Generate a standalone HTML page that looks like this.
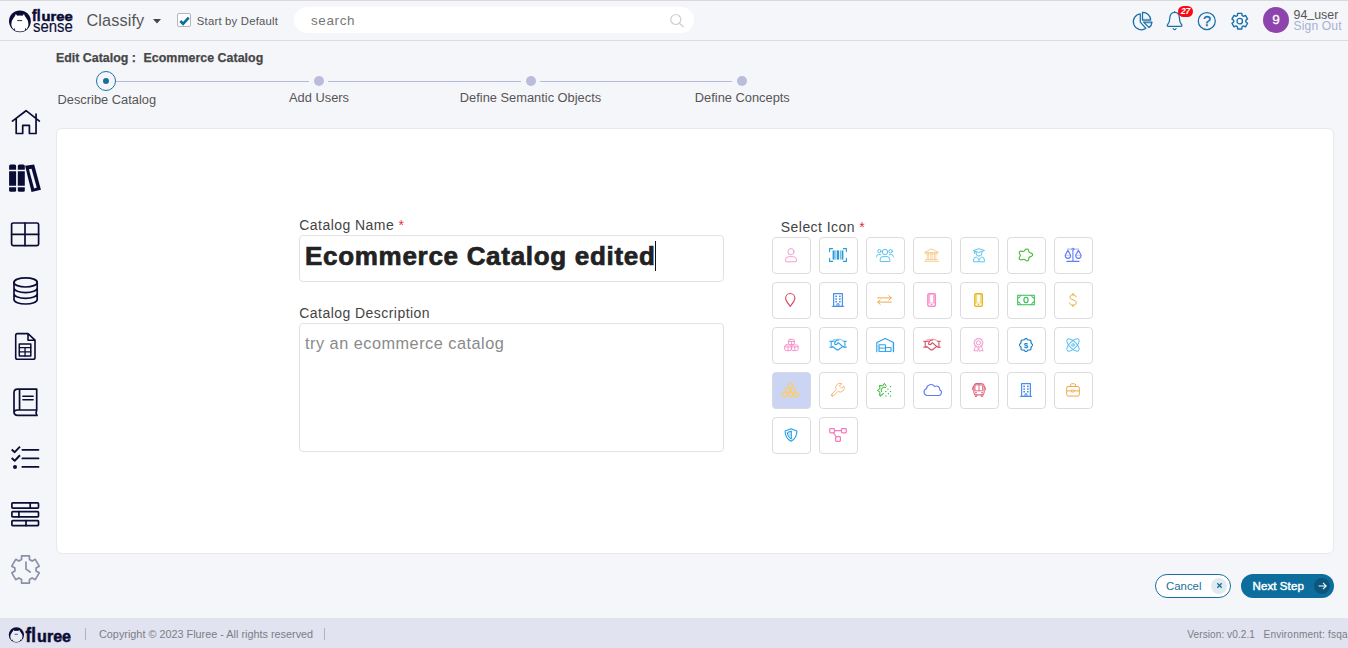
<!DOCTYPE html>
<html lang="en">
<head>
<meta charset="utf-8">
<title>Fluree Sense - Edit Catalog</title>
<style>
*{box-sizing:border-box;margin:0;padding:0}
html,body{width:1348px;height:648px;overflow:hidden}
body{background:#f5f6fa;font-family:"Liberation Sans",sans-serif;color:#444;position:relative}
.abs{position:absolute}
.t{position:absolute;white-space:nowrap;line-height:1}
svg{position:absolute;overflow:visible}
/* header */
#topline{left:0;top:0;width:1348px;height:1px;background:#d9d9dc}
#hdr{left:0;top:0;width:1348px;height:41px;border-bottom:1px solid #dcdcde}
#search{left:294px;top:7px;width:400px;height:26px;border-radius:13px;background:#fff}
#chk{left:177px;top:13px;width:14px;height:14px;background:#fff;border:1px solid #b5b5b5;border-radius:2px}
#avatar{left:1263px;top:7px;width:26px;height:26px;border-radius:13px;background:#8e44ad;color:#fff;-webkit-text-stroke:.3px #fff;font-size:13.5px;text-align:center;line-height:26px}
#badge{left:1178px;top:6px;width:15px;height:11px;border-radius:5.5px;background:#fb0a12;color:#fff;font-weight:bold;font-style:italic;font-size:8.5px;line-height:11px;text-align:center;letter-spacing:-.3px}
/* stepper */
.dot{position:absolute;width:10px;height:10px;border-radius:5px;background:#b9bcdb;top:76px}
.ln{position:absolute;height:1px;background:#b4b9d8;top:81px}
.lbl{position:absolute;white-space:nowrap;font-size:12.85px;line-height:1;color:#555;transform:translateX(-50%)}
/* card */
#card{left:56px;top:128px;width:1278px;height:426px;background:#fff;border:1px solid #e9e9e9;border-radius:6px}
.flabel{position:absolute;white-space:nowrap;font-size:14px;letter-spacing:.45px;line-height:1;color:#444}
.req{color:#dc3545}
.inp{position:absolute;left:299px;width:425px;background:#fff;border:1px solid #e2e2e2;border-radius:4px}
.ib{position:absolute;width:39px;height:37px;border:1px solid #dcdcdc;border-radius:4px;background:#fff}
.ib{display:flex;align-items:center;justify-content:center;padding:0 1.6px 1.5px 0}
.ib svg{position:static;flex:none;fill:none;stroke-width:1;stroke-linecap:round;stroke-linejoin:round}
.ib.sel{background:#cbd4f2;border-color:#d6d8e2}
/* footer */
#ftr{left:0;top:618px;width:1348px;height:30px;background:#e1e3f0}
.ft{position:absolute;white-space:nowrap;line-height:1;color:#7d7d85}
.vd{position:absolute;width:1px;height:12px;top:628px;background:#b4b4b8}
/* buttons */
#cancel{left:1155px;top:574px;width:76px;height:24px;border-radius:12px;border:1px solid #1a6f9a;background:#fff}
#next{left:1241px;top:574px;width:93px;height:24px;border-radius:12px;background:#0d6e9e}
button{font:inherit;padding:0;margin:0;border:0;background:none;text-align:left;display:block}
#next{border:0}
.rc{position:absolute;width:16px;height:16px;border-radius:8px;top:3px}
.side svg{stroke:#0b0c36;fill:none;stroke-width:1.7;stroke-linecap:round;stroke-linejoin:round}
</style>
</head>
<body>
<header>
<!-- HEADER -->
<div class="abs" id="hdr"></div>
<div class="abs" id="topline"></div>
<svg id="logo" style="left:0;top:0" width="80" height="40" viewBox="0 0 80 40">
 <g transform="translate(19.9 21.3)"><circle r="10.9" fill="#0b0c36"/><path d="M-4.1 -7.3 L-2.6 -5.5 Q0 -6.2 2.6 -5.5 L4.1 -7.3 Q4.7 -5 6.2 -3.6 Q8.8 -0.6 8.6 3.4 Q8.1 6.4 6.5 8.1 L5.6 6.4 L4.9 9.3 Q0 11.2 -4.9 9.3 L-5.6 6.4 L-6.5 8.1 Q-8.1 6.4 -8.6 3.4 Q-8.8 -0.6 -6.2 -3.6 Q-4.7 -5 -4.1 -7.3 Z" fill="#fff"/><path d="M-2.6 -0.7 H2.2" stroke="#0b0c36" stroke-width="0.9"/></g>
 <text y="21.25" font-family="Liberation Sans, sans-serif" font-weight="bold" fill="#0b0c36" stroke="#0b0c36" stroke-width="0.5"><tspan x="32.1" font-size="16.6" textLength="8.5" lengthAdjust="spacingAndGlyphs">fl</tspan><tspan x="41.6" font-size="13.3" textLength="31.2" lengthAdjust="spacingAndGlyphs">uree</tspan></text>
 <text x="33" y="31.5" font-family="Liberation Sans, sans-serif" font-size="15.8" fill="#0b0c36" stroke="#0b0c36" stroke-width="0.15" textLength="39.8" lengthAdjust="spacingAndGlyphs">sense</text>
</svg>
<div class="t" style="left:86.5px;top:12px;font-size:16.3px;color:#555;letter-spacing:.1px">Classify</div>
<svg style="left:153px;top:19px" width="8" height="5" viewBox="0 0 8 5"><path d="M0 0h8L4 4.6z" fill="#444"/></svg>
<div class="abs" id="chk"></div>
<svg style="left:178px;top:14px" width="12" height="12" viewBox="0 0 12 12"><path d="M2.3 7 L5.1 9.8 L10.7 3.6" fill="none" stroke="#0d6e9e" stroke-width="2.7"/></svg>
<div class="t" id="sbd" style="left:196.8px;top:15.8px;font-size:11.3px;color:#555;letter-spacing:.22px">Start by Default</div>
<div class="abs" id="search"></div>
<div class="t" style="left:311px;top:13.6px;font-size:13.5px;letter-spacing:.6px;color:#777">search</div>
<svg style="left:668px;top:12px" width="18" height="18" viewBox="0 0 18 18"><circle cx="7.8" cy="7.5" r="5" fill="none" stroke="#cfcfcf" stroke-width="1.2"/><path d="M11.4 11.2 L15.6 15" stroke="#cfcfcf" stroke-width="1.3" fill="none"/></svg>
<!-- right icons -->
<svg style="left:1131px;top:10px" width="22" height="22" viewBox="0 0 22 22" fill="none" stroke="#1870a8" stroke-width="1.25" stroke-linejoin="round">
 <path d="M9.3 3.8 A8 8 0 1 0 14.9 18.3 L9.3 12.1 Z"/>
 <path d="M11.5 9.9 H19.6 L19.4 8.4 H11.5 Z" fill="#c9d3dc" stroke="none"/>
 <path d="M11.5 2.4 A7.9 7.9 0 0 1 19.7 10 H11.5 Z"/>
 <path d="M12.9 12.2 H20.8 L20.4 14 H14.6 Z" fill="#c9d3dc" stroke="none"/>
 <path d="M12.6 12.1 H21 A8 8 0 0 1 18.1 17.6 Z"/>
</svg>
<svg style="left:1165px;top:10px" width="20" height="22" viewBox="0 0 20 22" fill="none" stroke="#1870a8" stroke-width="1.25" stroke-linejoin="round" stroke-linecap="round">
 <path d="M9.6 2.4 C6.4 2.4 4.8 5 4.8 8 C4.8 12 3.6 13.6 2.4 15 C2 15.6 2.4 16.4 3.2 16.4 H16 C16.8 16.4 17.2 15.6 16.8 15 C15.6 13.6 14.4 12 14.4 8 C14.4 5 12.800 2.4 9.6 2.4 Z"/>
 <path d="M8.2 18.6 a1.5 1.5 0 0 0 2.8 0 M9.6 1.5 V2.4"/>
</svg>
<div class="abs" id="badge">27</div>
<svg style="left:1196px;top:10px" width="22" height="22" viewBox="0 0 22 22" fill="none" stroke="#1870a8" stroke-width="1.25"><circle cx="10.8" cy="11" r="8.5"/></svg>
<div class="t" style="left:1202.9px;top:13.7px;font-size:14.5px;color:#1870a8;-webkit-text-stroke:.35px #1870a8">?</div>
<svg id="gear" style="left:1229px;top:10px" width="22" height="22" viewBox="0 0 22 22" fill="none" stroke="#1870a8" stroke-width="1.3" stroke-linejoin="round">
 <circle cx="10.75" cy="11.15" r="2.75"/>
 <path d="M8.45 5.50 L8.65 3.33 L12.85 3.33 L13.05 5.50 L14.49 6.33 L16.48 5.42 L18.57 9.05 L16.79 10.32 L16.79 11.98 L18.57 13.25 L16.48 16.88 L14.49 15.97 L13.05 16.80 L12.85 18.97 L8.65 18.97 L8.45 16.80 L7.01 15.97 L5.02 16.88 L2.93 13.25 L4.71 11.98 L4.71 10.32 L2.93 9.05 L5.02 5.42 L7.01 6.33 Z" stroke-width="1.4"/>
</svg>
<div class="abs" id="avatar">9</div>
<div class="t" style="left:1293.5px;top:9px;font-size:12.4px;color:#555">94<span style="position:relative;top:-2px">_</span>user</div>
<div class="t" style="left:1293.5px;top:20.2px;font-size:12.1px;letter-spacing:.15px;color:#a8b0d3">Sign Out</div>
</header>
<section id="steps">
<div class="t" style="left:56px;top:51.5px;font-size:12.4px;font-weight:bold;color:#474747;-webkit-text-stroke:.25px #474747">Edit Catalog :</div>
<div class="t" style="left:143.5px;top:51.5px;font-size:12.4px;font-weight:bold;color:#474747;-webkit-text-stroke:.25px #474747;letter-spacing:.04px">Ecommerce Catalog</div>
<div class="ln" style="left:116px;width:193px"></div>
<div class="ln" style="left:328px;width:193px"></div>
<div class="ln" style="left:540px;width:192px"></div>
<div class="abs" style="left:96px;top:70.5px;width:20px;height:20px;border-radius:10px;border:1.7px solid #1a74a2"></div>
<div class="abs" style="left:103px;top:77.5px;width:6px;height:6px;border-radius:3px;background:#1a6f9a"></div>
<div class="dot" style="left:314px"></div>
<div class="dot" style="left:526px"></div>
<div class="dot" style="left:737px"></div>
<div class="lbl" style="left:106.8px;top:93.5px">Describe Catalog</div>
<div class="lbl" style="left:319px;top:91.5px">Add Users</div>
<div class="lbl" style="left:530.5px;top:91.5px">Define Semantic Objects</div>
<div class="lbl" style="left:742.3px;top:91.5px">Define Concepts</div>
</section>
<nav class="side">
<svg style="left:11px;top:108px" width="30" height="28" viewBox="0 0 30 28"><path d="M1.4 13.1 L15.05 2.7 L28.4 13.1 M5.2 10.6 V25.5 H11.7 V17.4 H18.4 V25.5 H25.05 V6"/></svg>
<svg style="left:8px;top:164px" width="34" height="30" viewBox="0 0 34 30"><g fill="#0b0c36" stroke="none"><rect x="1.1" y="0.6" width="7" height="27.1" rx="1.5"/><rect x="9.8" y="0.6" width="7" height="27.1" rx="1.5"/><path d="M17.06 1.78 L26.14 0.48 L32.94 25.76 L23.54 28.02 Z"/></g><path d="M0.4 6.5h8.4M9 6.5h8.4" stroke="#f5f6fa" stroke-width="1.6"/><path d="M0.4 22.5h8.4M9 22.5h8.4" stroke="#f5f6fa" stroke-width="1.3"/><path d="M20.95 5.34 L23.54 4.69 L28.73 23.49 L26.14 24.46 Z" fill="#f5f6fa" stroke="none"/></svg>
<svg style="left:10px;top:221px" width="30" height="26" viewBox="0 0 30 26"><rect x="1.6" y="2" width="27" height="22.6" rx="1.6"/><path d="M15 2 V24.6 M1.6 13.3 H28.6"/></svg>
<svg style="left:12px;top:276px" width="28" height="30" viewBox="0 0 28 30"><ellipse cx="13.6" cy="6.4" rx="11.6" ry="4.6"/><path d="M2 6.4 V23.4 C2 26 7.2 28 13.6 28 C20 28 25.2 26 25.2 23.4 V6.4 M2 12 C2 14.6 7.2 16.6 13.6 16.6 C20 16.6 25.2 14.6 25.2 12 M2 17.8 C2 20.4 7.2 22.4 13.6 22.4 C20 22.4 25.2 20.4 25.2 17.8"/></svg>
<svg style="left:14px;top:332px" width="23" height="29" viewBox="0 0 23 29"><path d="M3.4 1.6 H14 L21 8.2 V25.4 Q21 27.2 19.2 27.2 H3.4 Q1.7 27.2 1.7 25.4 V3.4 Q1.7 1.6 3.4 1.6 Z M14 1.6 V8.2 H21" stroke-width="1.6"/><rect x="5.3" y="11.9" width="11.5" height="12.2" stroke-width="1.5"/><path d="M5.3 15.6 H16.8 M5.3 19.9 H16.8 M11.05 15.6 V24.1" stroke-width="1.3"/></svg>
<svg style="left:12px;top:387px" width="28" height="31" viewBox="0 0 28 31" stroke-width="1.55"><path d="M24.7 2.1 H5.6 Q2 2.1 2 5.7 V24.8 Q2 28.4 5.6 28.4 H25 M24.7 2.1 V23 H5.4 Q2 23.2 2 25.7 M7.55 2.1 V23 M24.7 23 Q23.4 25.6 25 28.4"/><path d="M10.9 9.3 H21.1 M10.9 12.7 H21.1" stroke-width="1.6"/></svg>
<svg style="left:10px;top:445px" width="30" height="26" viewBox="0 0 30 26"><path d="M1.7 4.5 L4.7 7.2 L10 1.7 M1.7 13.05 L4.7 15.75 L10 10.25" stroke-width="1.9" stroke-linecap="butt"/><path d="M12.3 4.86 H28.5 M12.3 13.41 H28.5 M12.3 21.97 H28.5" stroke-width="1.75"/><circle cx="5" cy="21.97" r="2.05" fill="#0b0c36" stroke="none"/></svg>
<svg style="left:10px;top:501px" width="30" height="27" viewBox="0 0 30 27" stroke-width="1.6"><rect x="1.9" y="1.9" width="26.6" height="5.2" rx="0.8"/><rect x="1.9" y="10.7" width="26.6" height="5.2" rx="0.8"/><rect x="1.9" y="19.6" width="26.6" height="5" rx="0.8"/><path d="M20.2 1.9 v5.2 M8.9 10.7 v5.2 M16 19.6 v5"/></svg>
<svg style="left:10px;top:554px" width="31" height="31" viewBox="0 0 31 31" style="stroke:#8c8fa8"><path d="M11.56 5.55 L11.57 1.96 L19.43 1.96 L19.44 5.55 L22.15 7.11 L25.26 5.32 L29.19 12.14 L26.09 13.94 L26.09 17.06 L29.19 18.86 L25.26 25.68 L22.15 23.89 L19.44 25.45 L19.43 29.04 L11.57 29.04 L11.56 25.45 L8.85 23.89 L5.74 25.68 L1.81 18.86 L4.91 17.06 L4.91 13.94 L1.81 12.14 L5.74 5.32 L8.85 7.11 Z" style="stroke:#8c8fa8" stroke-width="1.7"/><path d="M16 8 V15.1 L20.2 18" style="stroke:#8c8fa8" stroke-width="1.7"/></svg>
</nav>
<main>
<div class="abs" id="card"></div>
<label class="flabel" style="left:299.3px;top:218px">Catalog Name <span class="req">*</span></label>
<div class="inp" style="top:235px;height:47px"></div>
<div class="t" id="bigname" style="left:305px;top:242.5px;font-size:26px;font-weight:bold;color:#222;letter-spacing:.7px;-webkit-text-stroke:.7px #222">Ecommerce Catalog edited</div>
<div class="abs" style="left:655px;top:241px;width:1px;height:30px;background:#111"></div>
<label class="flabel" style="left:299.3px;top:306px">Catalog Description</label>
<div class="inp" style="top:323px;height:129px"></div>
<div class="t" style="left:305px;top:335px;font-size:16.3px;color:#8a8a8a;letter-spacing:.5px">try an ecommerce catalog</div>
<label class="flabel" style="left:780.8px;top:220px">Select Icon <span class="req">*</span></label>
<!--GRID-START-->
<div class="ib" style="left:772px;top:237px"><svg width="12" height="14" viewBox="0 0 12 14" stroke="#f29fd3"><circle cx="6" cy="3.7" r="3.1"/><path d="M0.6 13.4 V11.8 Q0.6 8.7 3.7 8.7 H8.3 Q11.4 8.7 11.4 11.8 V13.4 Z"/></svg></div>
<div class="ib" style="left:819px;top:237px"><svg width="18" height="14" viewBox="0 0 18 14" stroke="#2a9bd8"><path d="M0.6 3.6 V0.6 H3.6 M14.4 0.6 H17.4 V3.6 M0.6 10.4 V13.4 H3.6 M14.4 13.4 H17.4 V10.4" stroke-width="1.1"/><g fill="#2a9bd8" stroke="none"><rect x="3.6" y="2.4" width="2" height="9.2"/><rect x="6.4" y="2.4" width="1" height="9.2" opacity=".8"/><rect x="8" y="2.4" width="2" height="9.2"/><rect x="10.8" y="2.4" width="1" height="9.2" opacity=".8"/><rect x="12.6" y="2.4" width="1.8" height="9.2"/></g></svg></div>
<div class="ib" style="left:866px;top:237px"><svg width="18" height="14" viewBox="0 0 18 14" stroke="#5cc3f0"><circle cx="9" cy="4" r="2.7"/><path d="M4.2 13.2 V11.6 Q4.2 8.6 7 8.6 H11 Q13.8 8.6 13.8 11.6 V13.2 Z"/><circle cx="3.4" cy="3.2" r="1.7"/><circle cx="14.6" cy="3.2" r="1.7"/><path d="M0.6 9 V8.6 Q0.6 6.6 2.6 6.6 H4.6 M17.4 9 V8.6 Q17.4 6.6 15.4 6.6 H13.4"/></svg></div>
<div class="ib" style="left:913px;top:237px"><svg width="15" height="14" viewBox="0 0 15 14" stroke="#f8cb8e"><path d="M0.8 4.4 L7.5 0.8 L14.2 4.4 Z M1.8 5.9 H13.2 M1.6 11.6 H13.4 M0.6 13.3 H14.4" /><path d="M3.2 6.2 V11.2 M4.6 6.2 V11.2 M6.8 6.2 V11.2 M8.2 6.2 V11.2 M10.4 6.2 V11.2 M11.8 6.2 V11.2" stroke-width="0.8"/></svg></div>
<div class="ib" style="left:960px;top:237px"><svg width="12" height="14" viewBox="0 0 12 14" stroke="#5cc3f0"><path d="M0.5 2.5 L6 0.7 L11.5 2.5 L6 4.3 Z M1.6 3 V5.6"/><path d="M3.1 3.6 V5.2 A2.9 2.9 0 0 0 8.9 5.2 V3.6"/><path d="M0.6 13.4 V12 Q0.6 9.2 3.4 9 L6 11.4 L8.6 9 Q11.4 9.2 11.4 12 V13.4 Z M6 11.4 V13.4"/></svg></div>
<div class="ib" style="left:1007px;top:237px"><svg width="15" height="14" viewBox="0 0 15 14" stroke="#3dbb2a"><path d="M14.58 6.77 L14.42 7.35 L13.98 7.88 L13.36 8.31 L12.66 8.63 L12.00 8.87 L11.46 9.08 L11.11 9.32 L10.93 9.66 L10.87 10.11 L10.85 10.69 L10.77 11.32 L10.58 11.94 L10.22 12.45 L9.72 12.77 L9.12 12.87 L8.48 12.73 L7.87 12.43 L7.33 12.03 L6.87 11.64 L6.46 11.35 L6.05 11.22 L5.58 11.25 L5.01 11.41 L4.32 11.61 L3.55 11.76 L2.76 11.79 L2.05 11.63 L1.51 11.27 L1.20 10.73 L1.15 10.09 L1.32 9.42 L1.63 8.77 L1.97 8.21 L2.24 7.74 L2.36 7.32 L2.30 6.92 L2.07 6.49 L1.75 6.00 L1.44 5.43 L1.25 4.83 L1.27 4.24 L1.52 3.73 L2.01 3.37 L2.67 3.19 L3.41 3.16 L4.14 3.25 L4.78 3.38 L5.31 3.45 L5.72 3.39 L6.06 3.15 L6.39 2.75 L6.78 2.24 L7.27 1.71 L7.86 1.26 L8.51 0.98 L9.16 0.95 L9.75 1.18 L10.22 1.61 L10.55 2.19 L10.75 2.82 L10.88 3.40 L11.03 3.89 L11.26 4.25 L11.63 4.52 L12.16 4.74 L12.80 4.97 L13.47 5.28 L14.06 5.69 L14.45 6.20 L14.58 6.77Z" stroke-width="1.1"/></svg></div>
<div class="ib" style="left:1054px;top:237px"><svg width="18" height="14" viewBox="0 0 18 14" stroke="#627ef6"><path d="M2.9 1.1 H15" stroke="#cdcffb" stroke-width="1.7" stroke-linecap="butt"/><path d="M1.4 7.4 H6.4 M11.9 7.4 H16.9" stroke="#cdcffb" stroke-width="1.2"/><path d="M8.9 2.2 V13 M2.9 13.4 H15" stroke-width="1.1"/><circle cx="8.9" cy="1.2" r="1" fill="#fff"/><path d="M3.9 2.4 L1.55 6.5 A2.65 2.65 0 1 0 6.25 6.5 Z M14.4 2.4 L12.05 6.5 A2.65 2.65 0 1 0 16.75 6.5 Z" stroke-width="1.15"/></svg></div>
<div class="ib" style="left:772px;top:282px"><svg width="10.5" height="14" viewBox="0 0 10.5 14" stroke="#d4495f"><path d="M5.25 13.3 C2 9 0.6 7.4 0.6 5.2 A4.65 4.65 0 0 1 9.9 5.2 C9.9 7.4 8.5 9 5.25 13.3 Z" stroke-width="1.1"/></svg></div>
<div class="ib" style="left:819px;top:282px"><svg width="12" height="14" viewBox="0 0 12 14" stroke="#4a8fe8"><rect x="1.6" y="0.7" width="8.8" height="12.6" stroke-width="1.2"/><path d="M0.2 13.4 H11.8"/><path d="M5 13.2 V10.8 H7 V13.2"/><g fill="#4a8fe8" stroke="none"><rect x="3.3" y="2.6" width="1.7" height="1.5"/><rect x="7" y="2.6" width="1.7" height="1.5"/><rect x="3.3" y="5.3" width="1.7" height="1.5"/><rect x="7" y="5.3" width="1.7" height="1.5"/><rect x="3.3" y="8" width="1.7" height="1.5"/><rect x="7" y="8" width="1.7" height="1.5"/></g></svg></div>
<div class="ib" style="left:866px;top:282px"><svg width="15" height="14" viewBox="0 0 15 14" stroke="#f0a94e"><path d="M0.6 4.9 H14.2 M11.8 2.6 L14.2 4.9 L11.8 7.2 M14.4 9.1 H0.8 M3.2 6.8 L0.8 9.1 L3.2 11.4"/></svg></div>
<div class="ib" style="left:913px;top:282px"><svg width="9" height="14" viewBox="0 0 9 14" stroke="#f58cc8"><rect x="0.7" y="0.6" width="7.8" height="12.8" rx="1.3" fill="#fab2dc" stroke-width="1.1"/><rect x="3.2" y="1.9" width="2.8" height="7.6" fill="#fff" stroke="none"/><rect x="1.7" y="10.5" width="5.8" height="1.9" fill="#fff" stroke="none"/><path d="M4.1 11.45 H5.1" stroke-width="1"/></svg></div>
<div class="ib" style="left:960px;top:282px"><svg width="9" height="14" viewBox="0 0 9 14" stroke="#e6b422"><rect x="0.7" y="0.6" width="7.8" height="12.8" rx="1.3" fill="#f5d87a" stroke-width="1.1"/><rect x="3.2" y="1.9" width="2.8" height="7.6" fill="#fff" stroke="none"/><rect x="1.7" y="10.5" width="5.8" height="1.9" fill="#fff" stroke="none"/><path d="M4.1 11.45 H5.1" stroke-width="1"/></svg></div>
<div class="ib" style="left:1007px;top:282px"><svg width="18" height="14" viewBox="0 0 18 14" stroke="#2fbf4f"><rect x="0.7" y="2.2" width="16.6" height="9.6" stroke-width="1.05"/><ellipse cx="9" cy="7" rx="2.1" ry="2.7" stroke-width="1.1"/><path d="M3.4 2.6 A2.6 2.6 0 0 1 0.9 5.2 M14.6 2.6 A2.6 2.6 0 0 0 17.1 5.2 M3.4 11.4 A2.6 2.6 0 0 0 0.9 8.8 M14.6 11.4 A2.6 2.6 0 0 1 17.1 8.8"/></svg></div>
<div class="ib" style="left:1054px;top:282px"><svg width="8" height="14" viewBox="0 0 8 14" stroke="#e8aa33"><path d="M4 0.4 V1.8 M4 12.2 V13.6 M7.1 3.9 C6.9 2.5 5.7 1.8 4 1.8 C2.2 1.8 0.9 2.7 0.9 4.1 C0.9 5.6 2.2 6.2 4 6.8 C5.9 7.4 7.2 8.1 7.2 9.8 C7.2 11.3 5.8 12.2 4 12.2 C2.2 12.2 0.9 11.4 0.7 9.9" stroke-width="1"/></svg></div>
<div class="ib" style="left:772px;top:327px"><svg width="15" height="14" viewBox="0 0 15 14" stroke="#f58cc8"><g stroke-width="0.9" transform="translate(0.9 0)"><rect x="4.5" y="1.4" width="6" height="5.2" rx="1.6"/><path d="M4.5 3.4 H10.5 M7.5 3.4 V6.6"/><rect x="0.8" y="6.9" width="6.7" height="5.7" rx="1.6"/><path d="M0.8 8.9 H7.5 M4.15 8.9 V12.6"/><rect x="7.5" y="6.9" width="6.7" height="5.7" rx="1.6"/><path d="M7.5 8.9 H14.2 M10.85 8.9 V12.6"/></g></svg></div>
<div class="ib" style="left:819px;top:327px"><svg width="18" height="14" viewBox="0 0 18 14" stroke="#2a9fe8"><path d="M0.7 3.3 H3.6 M0.7 9.2 H3.6 M2.2 3.3 V9.2 M14.5 3.3 H17.4 M14.5 9.2 H17.4 M15.9 3.3 V9.2"/><path d="M4.2 1.7 H7.2 L8.4 1.3 H11.2 L13.8 2.6" opacity=".45" stroke-width="1.2"/><path d="M3.6 3.2 H5.4 M9.8 2.1 L7.2 2.4 L5.7 5 Q5.3 6.4 6.7 6.6 Q7.7 6.6 8.5 5.6 L9.3 4.6 L13.7 8.5 H14.5 M3.6 8.3 L7.4 11.5 Q8.6 12.3 9.8 11.5 L13.2 8.9" stroke-width="1.05"/></svg></div>
<div class="ib" style="left:866px;top:327px"><svg width="18" height="14" viewBox="0 0 18 14" stroke="#2a9fe8"><path d="M0.8 13.7 V4.4 L9.2 0.6 L17.6 4.4 V13.7" stroke-width="1.1"/><path d="M2.3 13.7 V5.4 M16.1 13.7 V5.4" stroke="#a9d8f5" stroke-width="0.9"/><rect x="3.5" y="6.8" width="6" height="6.6"/><path d="M3.5 10.1 H9.5 M9.5 9.6 H15 V13.4 H9.5"/></svg></div>
<div class="ib" style="left:913px;top:327px"><svg width="18" height="14" viewBox="0 0 18 14" stroke="#d4495f"><path d="M0.7 3.3 H3.6 M0.7 9.2 H3.6 M2.2 3.3 V9.2 M14.5 3.3 H17.4 M14.5 9.2 H17.4 M15.9 3.3 V9.2"/><path d="M4.2 1.7 H7.2 L8.4 1.3 H11.2 L13.8 2.6" opacity=".45" stroke-width="1.2"/><path d="M3.6 3.2 H5.4 M9.8 2.1 L7.2 2.4 L5.7 5 Q5.3 6.4 6.7 6.6 Q7.7 6.6 8.5 5.6 L9.3 4.6 L13.7 8.5 H14.5 M3.6 8.3 L7.4 11.5 Q8.6 12.3 9.8 11.5 L13.2 8.9" stroke-width="1.05"/></svg></div>
<div class="ib" style="left:960px;top:327px"><svg width="11" height="14" viewBox="0 0 11 14" stroke="#f29fd3"><path d="M9.98 4.80 L9.94 5.03 L9.82 5.25 L9.65 5.46 L9.47 5.64 L9.32 5.82 L9.23 6.01 L9.19 6.22 L9.21 6.45 L9.24 6.71 L9.26 6.97 L9.23 7.22 L9.12 7.43 L8.95 7.60 L8.73 7.70 L8.47 7.77 L8.22 7.82 L7.99 7.88 L7.80 7.97 L7.66 8.12 L7.53 8.32 L7.41 8.54 L7.27 8.76 L7.09 8.95 L6.88 9.06 L6.65 9.09 L6.40 9.05 L6.16 8.95 L5.92 8.84 L5.71 8.75 L5.50 8.72 L5.29 8.75 L5.08 8.84 L4.84 8.95 L4.60 9.05 L4.35 9.09 L4.12 9.06 L3.91 8.95 L3.73 8.76 L3.59 8.54 L3.47 8.32 L3.34 8.12 L3.20 7.97 L3.01 7.88 L2.78 7.82 L2.53 7.77 L2.27 7.70 L2.05 7.60 L1.88 7.43 L1.77 7.22 L1.74 6.97 L1.76 6.71 L1.79 6.45 L1.81 6.22 L1.77 6.01 L1.68 5.82 L1.53 5.64 L1.35 5.46 L1.18 5.25 L1.06 5.03 L1.02 4.80 L1.06 4.57 L1.18 4.35 L1.35 4.14 L1.53 3.96 L1.68 3.78 L1.77 3.59 L1.81 3.38 L1.79 3.15 L1.76 2.89 L1.74 2.63 L1.77 2.38 L1.88 2.17 L2.05 2.00 L2.27 1.90 L2.53 1.83 L2.78 1.78 L3.01 1.72 L3.20 1.63 L3.34 1.48 L3.47 1.28 L3.59 1.06 L3.73 0.84 L3.91 0.65 L4.12 0.54 L4.35 0.51 L4.60 0.55 L4.84 0.65 L5.08 0.76 L5.29 0.85 L5.50 0.88 L5.71 0.85 L5.92 0.76 L6.16 0.65 L6.40 0.55 L6.65 0.51 L6.88 0.54 L7.09 0.65 L7.27 0.84 L7.41 1.06 L7.53 1.28 L7.66 1.48 L7.80 1.63 L7.99 1.72 L8.22 1.78 L8.47 1.83 L8.73 1.90 L8.95 2.00 L9.12 2.17 L9.23 2.38 L9.26 2.63 L9.24 2.89 L9.21 3.15 L9.19 3.38 L9.23 3.59 L9.32 3.78 L9.47 3.96 L9.65 4.14 L9.82 4.35 L9.94 4.57 L9.98 4.80Z" stroke-width="1.1"/><circle cx="5.5" cy="4.8" r="2.1"/><path d="M2.4 8.4 L0.9 13 L3.2 12.5 L4.4 13.6 L5.5 9.6 L6.6 13.6 L7.8 12.5 L10.1 13 L8.6 8.4"/></svg></div>
<div class="ib" style="left:1007px;top:327px"><svg width="14" height="14" viewBox="0 0 14 14" stroke="#1a80c8"><path d="M13.50 7.00 L13.42 7.42 L13.20 7.82 L12.88 8.17 L12.55 8.49 L12.27 8.79 L12.08 9.10 L11.99 9.46 L11.98 9.88 L11.99 10.33 L11.96 10.80 L11.84 11.24 L11.60 11.60 L11.24 11.84 L10.80 11.96 L10.33 11.99 L9.88 11.98 L9.46 11.99 L9.10 12.08 L8.79 12.27 L8.49 12.55 L8.17 12.88 L7.82 13.20 L7.42 13.42 L7.00 13.50 L6.58 13.42 L6.18 13.20 L5.83 12.88 L5.51 12.55 L5.21 12.27 L4.90 12.08 L4.54 11.99 L4.13 11.98 L3.67 11.99 L3.20 11.96 L2.76 11.84 L2.40 11.60 L2.16 11.24 L2.04 10.80 L2.01 10.33 L2.02 9.88 L2.01 9.46 L1.92 9.10 L1.73 8.79 L1.45 8.49 L1.12 8.17 L0.80 7.82 L0.58 7.42 L0.50 7.00 L0.58 6.58 L0.80 6.18 L1.12 5.83 L1.45 5.51 L1.73 5.21 L1.92 4.90 L2.01 4.54 L2.02 4.13 L2.01 3.67 L2.04 3.20 L2.16 2.76 L2.40 2.40 L2.76 2.16 L3.20 2.04 L3.67 2.01 L4.12 2.02 L4.54 2.01 L4.90 1.92 L5.21 1.73 L5.51 1.45 L5.83 1.12 L6.18 0.80 L6.58 0.58 L7.00 0.50 L7.42 0.58 L7.82 0.80 L8.17 1.12 L8.49 1.45 L8.79 1.73 L9.10 1.92 L9.46 2.01 L9.88 2.02 L10.33 2.01 L10.80 2.04 L11.24 2.16 L11.60 2.40 L11.84 2.76 L11.96 3.20 L11.99 3.67 L11.98 4.12 L11.99 4.54 L12.08 4.90 L12.27 5.21 L12.55 5.51 L12.88 5.83 L13.20 6.18 L13.42 6.58 L13.50 7.00Z" stroke-width="1.2"/><text x="7" y="9.9" text-anchor="middle" font-family="Liberation Sans, sans-serif" font-weight="bold" font-size="8" fill="#1a80c8" stroke="none">$</text></svg></div>
<div class="ib" style="left:1054px;top:327px"><svg width="14" height="14" viewBox="0 0 14 14" stroke="#5cc3f0"><ellipse cx="7" cy="7" rx="8" ry="3.5" transform="rotate(45 7 7)"/><ellipse cx="7" cy="7" rx="8" ry="3.5" transform="rotate(-45 7 7)"/><circle cx="7" cy="7" r="1.3"/></svg></div>
<div class="ib sel" style="left:772px;top:372px"><svg width="17" height="14" viewBox="0 0 17 14" stroke="#f9cd74"><g stroke-width="1.3"><circle cx="8.5" cy="2.7" r="2.3"/><circle cx="5.7" cy="7.2" r="2.3"/><circle cx="11.3" cy="7.2" r="2.3"/><circle cx="2.9" cy="11.6" r="2.3"/><circle cx="8.5" cy="11.6" r="2.3"/><circle cx="14.1" cy="11.6" r="2.3"/></g></svg></div>
<div class="ib" style="left:819px;top:372px"><svg width="15" height="14" viewBox="0 0 15 14" stroke="#f9b97a"><path d="M1.22 11.62 L6.19 6.65 A4.6 4.6 0 0 1 12.02 0.18 L9.57 2.63 L11.97 5.03 L14.42 2.58 A4.6 4.6 0 0 1 7.95 8.41 L2.98 13.38 A1.25 1.25 0 0 1 1.22 11.62 Z" stroke-width="1.05" transform="translate(0.3 0.5) scale(0.95)"/><circle cx="2.4" cy="12.3" r="0.35"/></svg></div>
<div class="ib" style="left:866px;top:372px"><svg width="15" height="14" viewBox="0 0 15 14" stroke="#35b52c"><path d="M5.60 11.74 L2.45 12.35 L3.06 9.20 L0.40 7.40 L3.06 5.60 L2.45 2.45 L5.60 3.06 L7.40 0.40 L9.20 3.06" stroke-width="1"/><path d="M8.6 4.4 A3.2 3.2 0 0 0 4.4 8.6" stroke-width="1"/><g fill="#2fb84a" stroke="none"><rect x="12.9" y="3.0" width="1.2" height="1.2"/><rect x="10.3" y="5.6" width="1.2" height="1.2"/><rect x="12.9" y="7.9" width="1.2" height="1.2"/><rect x="8.2" y="7.9" width="1.2" height="1.2"/><rect x="5.6" y="10.0" width="1.2" height="1.2"/><rect x="10.8" y="10.0" width="1.2" height="1.2"/><rect x="3.0" y="12.4" width="1.2" height="1.2"/><rect x="8.2" y="12.4" width="1.2" height="1.2"/><rect x="12.9" y="12.4" width="1.2" height="1.2"/></g></svg></div>
<div class="ib" style="left:913px;top:372px"><svg width="18" height="14" viewBox="0 0 18 14" stroke="#5b7cf8"><path d="M4 12.5 A3.5 3.5 0 0 1 3.5 5.7 A4.5 4.5 0 0 1 11.7 3.5 A3.3 3.3 0 0 1 16.7 6.8 A3 3 0 0 1 15 12.5 Z" stroke-width="1.1"/></svg></div>
<div class="ib" style="left:960px;top:372px"><svg width="14" height="14" viewBox="0 0 14 14" stroke="#d8506a"><rect x="1.9" y="0.7" width="10.2" height="11.2" rx="2.2" stroke-width="1"/><rect x="3.4" y="1.9" width="7.2" height="5.9" stroke-width="0.8"/><path d="M7 0.7 V7.8" stroke-width="0.8"/><path d="M3.3 9.7 H4.5 M9.5 9.7 H10.7" stroke-width="0.9"/><path d="M1.9 3.4 Q0.5 3.6 0.6 5.2 V6.8 M12.1 3.4 Q13.5 3.6 13.4 5.2 V6.8" stroke-width="0.9"/><path d="M3.1 11.9 V13.4 H4.9 V11.9 M9.1 11.9 V13.4 H10.9 V11.9" stroke-width="0.8"/></svg></div>
<div class="ib" style="left:1007px;top:372px"><svg width="12" height="14" viewBox="0 0 12 14" stroke="#4a8fe8"><rect x="1.6" y="0.7" width="8.8" height="12.6" stroke-width="1.2"/><path d="M0.2 13.4 H11.8"/><path d="M5 13.2 V10.8 H7 V13.2"/><g fill="#4a8fe8" stroke="none"><rect x="3.3" y="2.6" width="1.7" height="1.5"/><rect x="7" y="2.6" width="1.7" height="1.5"/><rect x="3.3" y="5.3" width="1.7" height="1.5"/><rect x="7" y="5.3" width="1.7" height="1.5"/><rect x="3.3" y="8" width="1.7" height="1.5"/><rect x="7" y="8" width="1.7" height="1.5"/></g></svg></div>
<div class="ib" style="left:1054px;top:372px"><svg width="14" height="14" viewBox="0 0 14 14" stroke="#f0a94e"><rect x="0.7" y="3.5" width="12.6" height="9.6" rx="1.4"/><path d="M4.6 3.5 V1.7 Q4.6 0.8 5.5 0.8 H8.5 Q9.4 0.8 9.4 1.7 V3.5 M0.7 7.9 H5.4 M8.6 7.9 H13.3"/><rect x="5.8" y="7.1" width="2.4" height="1.8" stroke-width="0.9"/></svg></div>
<div class="ib" style="left:772px;top:417px"><svg width="14" height="14" viewBox="0 0 14 14" stroke="#1f9fe8"><path d="M7 0.8 L12.9 3 C12.9 8 10.6 11.4 7 13.3 C3.4 11.4 1.1 8 1.1 3 Z" stroke-width="1.1"/><path d="M7 3.1 L3.3 4.5 C3.5 7.6 4.8 9.6 7 10.9 Z" stroke-width="1" fill="#bfe3f9"/></svg></div>
<div class="ib" style="left:819px;top:417px"><svg width="18" height="14" viewBox="0 0 18 14" stroke="#f877be"><rect x="0.7" y="0.6" width="4.8" height="4.2" rx="0.8" stroke-width="1.2"/><rect x="12.5" y="0.6" width="4.8" height="4.2" rx="0.8" stroke-width="1.2"/><rect x="6.6" y="8.6" width="4.8" height="4.8" rx="0.8" stroke-width="1.2"/><path d="M5.5 2.6 H12.5 M4.4 4.8 L7.2 8.8" stroke-width="1.1"/></svg></div>
<!--GRID-END-->
</main>
<button type="button" class="abs" id="cancel"><span class="t" style="left:10px;top:6px;font-size:11.4px;color:#1a6f9a">Cancel</span><span class="rc" style="left:55px;background:#dfeaf1"></span><svg style="left:60.5px;top:8px" width="5" height="5" viewBox="0 0 5 5"><path d="M0.3 0.3 L4.7 4.7 M4.7 0.3 L0.3 4.7" stroke="#1a6f9a" stroke-width="1.3" fill="none"/></svg></button>
<button type="button" class="abs" id="next"><span class="t" style="left:11.5px;top:7px;font-size:11.5px;color:#fff;-webkit-text-stroke:.45px #fff;letter-spacing:.1px">Next Step</span><span class="rc" style="left:73px;top:4px;background:#0a567c"></span><svg style="left:77px;top:8px" width="9" height="8" viewBox="0 0 9 8"><path d="M0.6 4 H8 M5 0.8 L8.2 4 L5 7.2" stroke="#fff" stroke-width="1.1" fill="none"/></svg></button>
<footer>
<div class="abs" id="ftr"></div>
<svg id="flogo" style="left:0;top:618px" width="90" height="30" viewBox="0 0 90 30">
 <g transform="translate(16.4 16.8) scale(0.7)"><circle r="10.9" fill="#0b0c36"/><path d="M-4.1 -7.3 L-2.6 -5.5 Q0 -6.2 2.6 -5.5 L4.1 -7.3 Q4.7 -5 6.2 -3.6 Q8.8 -0.6 8.6 3.4 Q8.1 6.4 6.5 8.1 L5.6 6.4 L4.9 9.3 Q0 11.2 -4.9 9.3 L-5.6 6.4 L-6.5 8.1 Q-8.1 6.4 -8.6 3.4 Q-8.8 -0.6 -6.2 -3.6 Q-4.7 -5 -4.1 -7.3 Z" fill="#e9ebf5"/><path d="M-2.6 -0.7 H2.2" stroke="#0b0c36" stroke-width="0.9"/></g>
 <text y="23.75" font-family="Liberation Sans, sans-serif" font-weight="bold" fill="#0b0c36" stroke="#0b0c36" stroke-width="0.55"><tspan x="25.6" font-size="19.7" textLength="10.2" lengthAdjust="spacingAndGlyphs">fl</tspan><tspan x="37.1" font-size="16.4" textLength="33.9" lengthAdjust="spacingAndGlyphs">uree</tspan></text>
</svg>
<div class="vd" style="left:85px"></div>
<div class="ft" style="left:99px;top:629px;font-size:10.85px">Copyright © 2023 Fluree - All rights reserved</div>
<div class="vd" style="left:324px"></div>
<div class="ft" style="left:1187.3px;top:629.5px;font-size:10.1px;letter-spacing:.06px">Version: v0.2.1</div>
<div class="ft" style="left:1263.5px;top:629.5px;font-size:10.1px;letter-spacing:.17px">Environment: fsqa</div>
</footer>
</body>
</html>
